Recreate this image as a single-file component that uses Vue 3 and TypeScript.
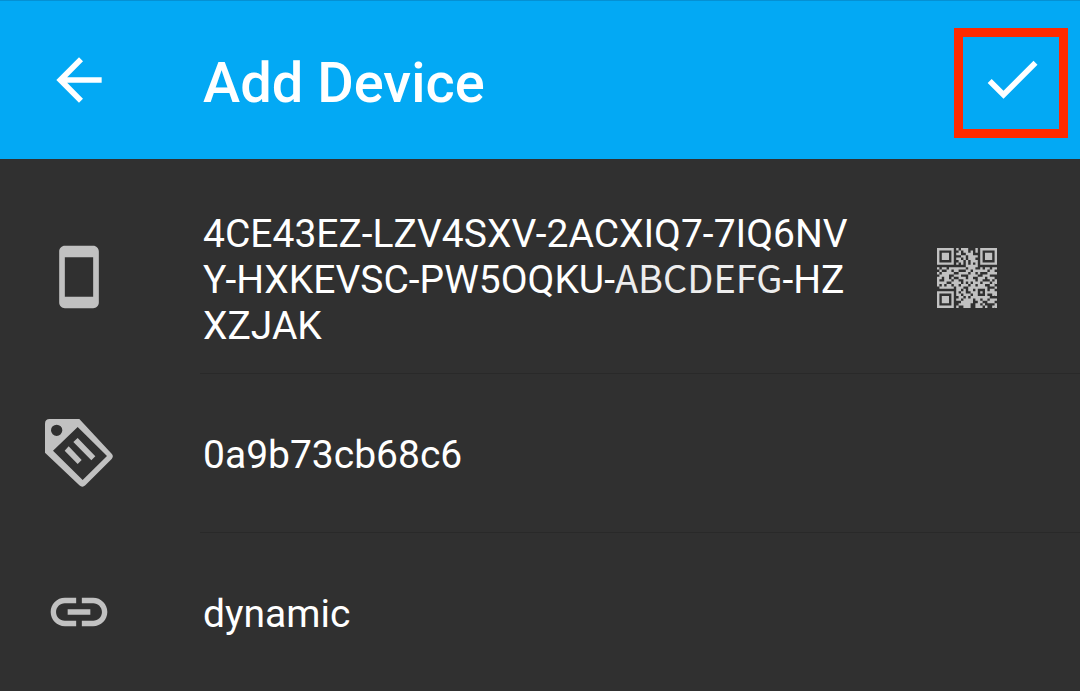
<script setup lang="ts">
import { ref } from 'vue'

const deviceName = ref('0a9b73cb68c6')
const addresses = ref('dynamic')

const qrRows: string[] = [
  '1111111010111000101111111',
  '1000001001011010101000001',
  '1011101011001110001011101',
  '1011101000110111101011101',
  '1011101011010111001011101',
  '1000001001101011101000001',
  '1111111010101010101111111',
  '0000000000001111100000000',
  '1011011111110111001011011',
  '0100110110001101111110110',
  '1011111001111011010001111',
  '0111100111000111100111000',
  '1101101001110110011101110',
  '1001110110011111011000101',
  '1111001111010101110111011',
  '1010110110111011011100110',
  '0111111011100111111110001',
  '0000000011010110100010110',
  '1111111010110011101011111',
  '1000001011011101100010011',
  '1011101001101011111111000',
  '1011101011011110110110111',
  '1011101000111110011001110',
  '1000001001111100110100001',
  '1111111010011100111010011',
]
const qrPath = qrRows
  .flatMap((row, y) => [...row].map((cell, x) => (cell === '1' ? `M${x} ${y}h1v1h-1z` : '')))
  .join('')
</script>

<template>
  <main class="screen">
    <header class="bar">
      <button class="back" type="button" aria-label="Back">
        <svg class="icon" viewBox="0 0 24 24"><path d="M20 11H7.83l5.59-5.59L12 4l-8 8 8 8 1.41-1.41L7.83 13H20z" /></svg>
      </button>
      <h1 class="title">Add Device</h1>
      <button class="done" type="button" aria-label="Done">
        <svg class="icon" viewBox="0 0 24 24"><path d="M9 16.17L4.83 12l-1.42 1.41L9 19 21 7l-1.41-1.41z" /></svg>
      </button>
    </header>

    <section class="row row-id">
      <div class="lead">
        <svg class="icon" viewBox="0 0 24 24"><path d="M17 1.01L7 1c-1.1 0-1.99.9-1.99 2v18c0 1.1.89 2 1.99 2h10c1.1 0 2-.9 2-2V3c0-1.1-.9-1.99-2-1.99zM17 19H7V5h10z" /></svg>
      </div>
      <div class="content">
        <p class="device-id">4CE43EZ-LZV4SXV-2ACXIQ7-7IQ6NVY-HXKEVSC-PW5OQKU-<span class="sample">ABCDEFG</span>-HZXZJAK</p>
        <button class="scan" type="button" aria-label="Scan QR code">
          <svg class="qr" viewBox="0 0 25 25"><path :d="qrPath" /></svg>
        </button>
      </div>
    </section>

    <section class="row">
      <label class="lead" for="device-name" aria-label="Device name">
        <svg class="icon" viewBox="0 0 204 204">
          <path fill-rule="evenodd" d="M14 0H103L200 104Q207 112 200 120L121 199Q112 207 103 199L0 101V14Q0 0 14 0ZM35 17A17 17 0 1 0 35 51A17 17 0 1 0 35 17ZM98 24L24 95L113 183L186 111Z" />
          <path d="M98 57L151 112L139 124L85 69ZM71 82L110 123L98 135L59 95Z" />
        </svg>
      </label>
      <div class="content">
        <input id="device-name" v-model="deviceName" class="field" type="text" spellcheck="false" />
      </div>
    </section>

    <section class="row">
      <label class="lead" for="addresses" aria-label="Addresses">
        <svg class="icon" viewBox="0 0 24 24"><path d="M3.9 12c0-1.71 1.39-3.1 3.1-3.1h4V7H7c-2.76 0-5 2.24-5 5s2.24 5 5 5h4v-1.9H7c-1.71 0-3.1-1.39-3.1-3.1zM8 13h8v-2H8v2zm9-6h-4v1.9h4c1.71 0 3.1 1.39 3.1 3.1s-1.39 3.1-3.1 3.1h-4V17h4c2.76 0 5-2.24 5-5s-2.24-5-5-5z" /></svg>
      </label>
      <div class="content">
        <input id="addresses" v-model="addresses" class="field" type="text" spellcheck="false" />
      </div>
    </section>
  </main>
</template>

<style>
body {
  margin: 0;
  background: #303030;
}
</style>

<style scoped>
.screen {
  font-family: Roboto, "Noto Sans", sans-serif;
  font-size: 39px;
  line-height: 46px;
  color: #fff;
  background: #303030;
}
.bar {
  display: flex;
  align-items: center;
  box-sizing: border-box;
  min-height: 159px;
  padding: 6px 12px 0 45px;
  background: #03a9f4;
  border-top: 1px solid #0590d3;
}
button {
  padding: 0;
  border: 0;
  background: none;
  color: inherit;
  cursor: pointer;
}
.icon {
  display: block;
  flex: none;
  width: 68px;
  height: 68px;
  fill: currentColor;
}
.back {
  margin-right: 90px;
  padding-bottom: 6px;
}
.title {
  flex: 1;
  margin: 0;
  font-size: 56px;
  line-height: 66px;
  font-weight: 500;
}
.done {
  display: flex;
  align-items: center;
  justify-content: center;
  box-sizing: border-box;
  width: 114px;
  height: 110px;
  padding: 0 0 8px 2px;
  border: 9px solid #ff2a00;
}
.row {
  display: flex;
}
.lead {
  display: flex;
  align-items: center;
  flex: none;
  box-sizing: border-box;
  width: 200px;
  padding-left: 45px;
  padding-bottom: 2px;
  color: #c1c1c1;
}
.content {
  display: flex;
  align-items: center;
  flex: 1;
  min-width: 0;
  box-sizing: border-box;
  min-height: 159px;
  padding: 0 83px 0 3px;
  border-bottom: 1px solid #292929;
}
.row:last-child .content {
  border-bottom: 0;
}
.row-id .lead {
  padding-top: 22px;
}
.row-id .content {
  padding-top: 52px;
  padding-bottom: 24px;
}
.device-id {
  flex: 1;
  margin: 0 82px 0 0;
  word-break: break-all;
}
.sample {
  display: inline-block;
  font-family: "Noto Sans CJK SC", sans-serif;
  font-size: 38px;
  line-height: 40px;
  vertical-align: top;
  color: #ededed;
}
.scan {
  padding-bottom: 4px;
  color: #c1c1c1;
}
.qr {
  display: block;
  width: 60px;
  height: 60px;
  fill: currentColor;
}
.field {
  width: 100%;
  height: 46px;
  padding: 3px 0 0;
  border: 0;
  outline: 0;
  background: none;
  color: inherit;
  font: inherit;
}
</style>
